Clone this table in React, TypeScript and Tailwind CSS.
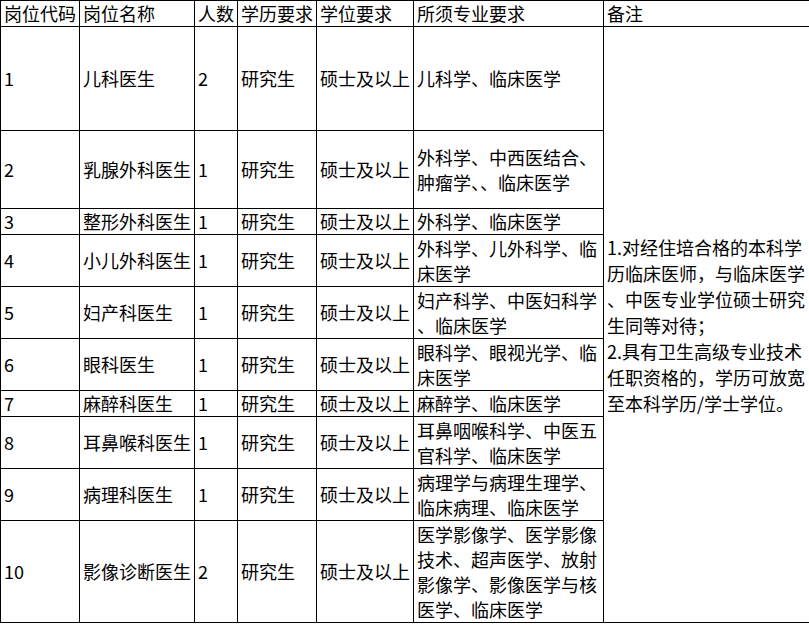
const rows = [
  { code: "1", name: "儿科医生", num: "2", major: ["儿科学、临床医学"], h: "h-[104px]" },
  { code: "2", name: "乳腺外科医生", num: "1", major: ["外科学、中西医结合、", "肿瘤学、、临床医学"], h: "h-[78px]" },
  { code: "3", name: "整形外科医生", num: "1", major: ["外科学、临床医学"], h: "h-[26px]" },
  { code: "4", name: "小儿外科医生", num: "1", major: ["外科学、儿外科学、临", "床医学"], h: "h-[52px]" },
  { code: "5", name: "妇产科医生", num: "1", major: ["妇产科学、中医妇科学", "、临床医学"], h: "h-[52px]" },
  { code: "6", name: "眼科医生", num: "1", major: ["眼科学、眼视光学、临", "床医学"], h: "h-[52px]" },
  { code: "7", name: "麻醉科医生", num: "1", major: ["麻醉学、临床医学"], h: "h-[26px]" },
  { code: "8", name: "耳鼻喉科医生", num: "1", major: ["耳鼻咽喉科学、中医五", "官科学、临床医学"], h: "h-[52px]" },
  { code: "9", name: "病理科医生", num: "1", major: ["病理学与病理生理学、", "临床病理、临床医学"], h: "h-[52px]" },
  {
    code: "10",
    name: "影像诊断医生",
    num: "2",
    major: ["医学影像学、医学影像", "技术、超声医学、放射", "影像学、影像医学与核", "医学、临床医学"],
    h: "h-[102px]",
  },
]

const remark = [
  "1.对经住培合格的本科学",
  "历临床医师，与临床医学",
  "、中医专业学位硕士研究",
  "生同等对待；",
  "2.具有卫生高级专业技术",
  "任职资格的，学历可放宽",
  "至本科学历/学士学位。",
]

const cell = "border border-black px-[3px] py-0 align-middle text-left font-normal whitespace-nowrap overflow-hidden"

export default function App() {
  return (
    <div className="bg-white w-[809px] h-[625px] overflow-hidden">
      <table
        className="table-fixed border-collapse w-[809px] text-[18px] leading-[25px] text-black"
        style={{ fontFamily: '"Noto Sans CJK SC", "Noto Sans", sans-serif' }}
      >
        <colgroup>
          <col className="w-[79px]" />
          <col className="w-[115px]" />
          <col className="w-[43px]" />
          <col className="w-[79px]" />
          <col className="w-[97px]" />
          <col className="w-[190px]" />
          <col className="w-[206px]" />
        </colgroup>
        <thead>
          <tr className="h-[26px]">
            <th className={cell}>岗位代码</th>
            <th className={cell}>岗位名称</th>
            <th className={cell}>人数</th>
            <th className={cell}>学历要求</th>
            <th className={cell}>学位要求</th>
            <th className={cell}>所须专业要求</th>
            <th className={cell}>备注</th>
          </tr>
        </thead>
        <tbody>
          {rows.map((r, i) => (
            <tr key={r.code} className={r.h}>
              <td className={cell}>{r.code}</td>
              <td className={cell}>{r.name}</td>
              <td className={cell}>{r.num}</td>
              <td className={cell}>研究生</td>
              <td className={cell}>硕士及以上</td>
              <td className={cell}>
                {r.major.map((m) => (
                  <div key={m}>{m}</div>
                ))}
              </td>
              {i === 0 && (
                <td className={cell} rowSpan={rows.length}>
                  {remark.map((t) => (
                    <div key={t} className="leading-[26px]">{t}</div>
                  ))}
                </td>
              )}
            </tr>
          ))}
        </tbody>
      </table>
    </div>
  )
}
